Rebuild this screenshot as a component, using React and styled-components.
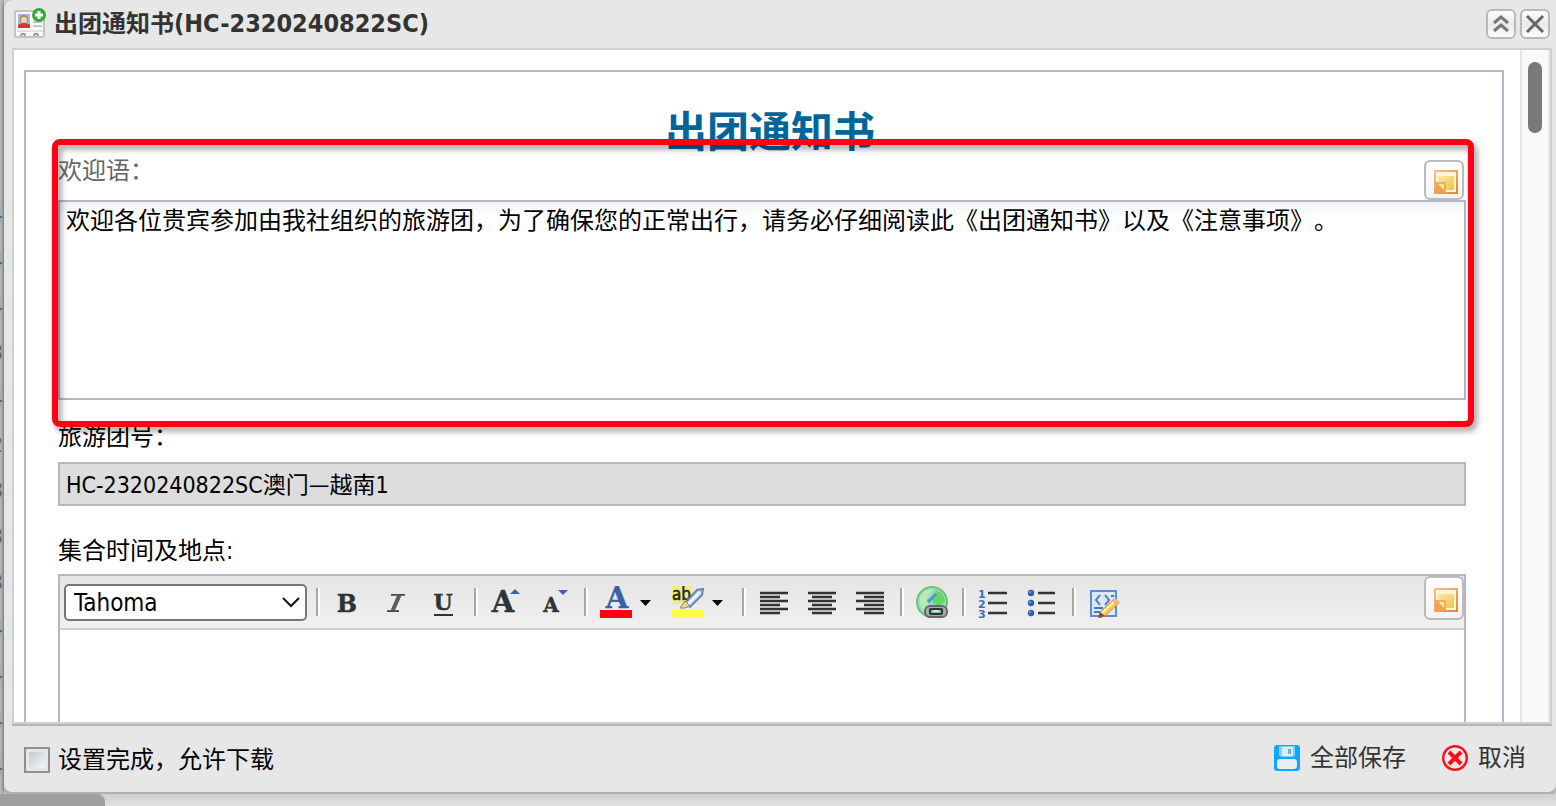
/* eslint-disable react/prop-types */
import { useState } from 'react';
import styled, { createGlobalStyle } from 'styled-components';

const GlobalStyle = createGlobalStyle`
  * {
    box-sizing: border-box;
  }

  body {
    margin: 0;
    overflow: hidden;
    background: #dedede;
    color: #000;
    font-family: "DejaVu Sans Condensed", "Noto Sans CJK SC", sans-serif;
    font-size: 24px;
    line-height: 32px;
    text-spacing-trim: space-all;
  }

  button, input, select, textarea {
    font-family: inherit;
    color: inherit;
  }
`;

const Page = styled.div`
  height: 100vh;
  display: grid;
  grid-template-columns: 4px minmax(0, 1fr);
  grid-template-rows: minmax(0, 1fr) 12px;
`;

const GridBehind = styled.div`
  padding-top: 191px;
  overflow: hidden;
  background: linear-gradient(to right, #bfc0bf, #a9a9a9);
`;

const GridCell = styled.div`
  height: 46px;
  display: flex;
  align-items: center;
  justify-content: flex-end;
  padding-right: 1px;
  border-top: 1px solid #b4b4b4;
  color: #666;
  font-size: 22px;
`;

const BottomScroll = styled.div`
  grid-column: 1 / -1;
  background: linear-gradient(#cfcfcf, #e2e2e2);
`;

const BottomThumb = styled.div`
  width: 105px;
  height: 12px;
  border-radius: 0 8px 0 0;
  background: #9f9f9f;
`;

const Dialog = styled.section`
  display: flex;
  flex-direction: column;
  min-height: 0;
  padding: 0 4px 0 8px;
  background: #e7e7e7;
  border-radius: 8px 0 8px 8px;
  box-shadow: 0 1px 4px rgba(0, 0, 0, .5), inset 0 -2px 0 #b0b0b0;
`;

const Header = styled.header`
  display: flex;
  align-items: center;
  flex: none;
  height: 48px;
  padding: 0 2px;
`;

const Heading = styled.h1`
  flex: 1;
  margin: 0 0 0 8px;
  font-size: 24px;
  line-height: 32px;
  color: #333;
`;

const TourCode = styled.span`
  font-size: 25px;
`;

const ToolButton = styled.button`
  width: 30px;
  height: 30px;
  margin-left: 4px;
  padding: 0;
  display: flex;
  align-items: center;
  justify-content: center;
  border: 2px solid #b9b9b9;
  border-radius: 6px;
  background: linear-gradient(#fff, #e9e9e9 50%, #fdfdfd);
`;

const Body = styled.div`
  flex: 1;
  min-height: 0;
  display: flex;
  overflow: hidden;
  background: #fff;
  border: 2px solid #d0d0d0;
  box-shadow: 0 2px 0 #bdb2b2;
`;

const Content = styled.div`
  flex: 1;
  min-width: 0;
  padding: 20px 16px 0 10px;
`;

const Track = styled.div`
  width: 30px;
  padding: 12px 6px;
  background: #fafafa;
  border: solid #e8e8e8;
  border-width: 0 2px;
`;

const Thumb = styled.div`
  height: 71px;
  border-radius: 7px;
  background: #797979;
`;

const Sheet = styled.form`
  padding: 34px 36px 0 32px;
  border: 2px solid #b5b7c8;
`;

const SheetTitle = styled.h2`
  margin: 0;
  padding-left: 16px;
  text-align: center;
  font-size: 42px;
  line-height: 54px;
  color: #069;
`;

const Welcome = styled.div`
  position: relative;
`;

const Highlight = styled.div`
  position: absolute;
  top: -21px;
  right: -8px;
  bottom: -27px;
  left: -6px;
  border: 6px solid #ff0012;
  border-radius: 8px;
  filter: drop-shadow(3px 4px 3px rgba(0, 0, 0, .4));
  pointer-events: none;
`;

const FieldHead = styled.div`
  display: flex;
  justify-content: space-between;
  height: 40px;
  padding-right: 2px;
`;

const Label = styled.label`
  display: block;
  line-height: ${(props) => (props.$muted ? 22 : 32)}px;
  color: ${(props) => (props.$muted ? '#666' : '#000')};
`;

const NoteButton = styled.button`
  width: 40px;
  height: ${(props) => (props.$tall ? 44 : 40)}px;
  padding: 4px 0 0 4px;
  display: flex;
  align-items: center;
  justify-content: center;
  border: 2px solid #bbb;
  border-radius: 6px;
  background: linear-gradient(#fff, #f3f3f3);
`;

const TextArea = styled.textarea`
  display: block;
  width: 100%;
  height: 200px;
  padding: 3px 6px;
  border: 2px solid #b5b7c8;
  outline: none;
  resize: none;
  background: linear-gradient(#edf1f3, #fff 14px);
  font-size: 24px;
  line-height: 32px;
  text-spacing-trim: space-all;
`;

const Field = styled.div`
  padding-top: ${(props) => props.$top}px;
`;

const CodeInput = styled.input`
  display: block;
  width: 100%;
  height: 44px;
  margin-top: 9px;
  padding: 0 6px 2px;
  border: 2px solid #b5b7c8;
  background: #ddd;
  font-size: 23px;
`;

const Editor = styled.div`
  margin-top: 7px;
  height: 320px;
  border: 2px solid #b5b7c8;
`;

const Toolbar = styled.div`
  display: flex;
  align-items: center;
  height: 54px;
  padding-left: 4px;
  border-bottom: 2px solid #d0d0d0;
  background: linear-gradient(#e5e5e5, #f0f0f0);
`;

const FontPicker = styled.div`
  position: relative;
  width: 243px;
  margin-right: 3px;

  svg {
    position: absolute;
    top: 12px;
    right: 7px;
    pointer-events: none;
  }
`;

const FontSelect = styled.select`
  display: block;
  width: 100%;
  height: 37px;
  padding: 2px 8px 0;
  appearance: none;
  border: 2px solid #767676;
  border-radius: 5px;
  background: #fff;
  color: #000;
  font-size: 24px;
`;

const Separator = styled.span`
  width: 4px;
  height: 28px;
  margin: 0 4px 0 6px;
  border-left: 2px solid #aca899;
  border-right: 2px solid #fff;
`;

const IconButton = styled.button`
  width: ${(props) => (props.$menu ? 72 : 48)}px;
  height: 40px;
  padding: 0 8px;
  display: flex;
  align-items: center;
  gap: 8px;
  border: 0;
  background: none;

  svg {
    flex: none;
  }
`;

const NoteSlot = styled.div`
  flex: 1;
  display: flex;
  justify-content: flex-end;
  align-self: flex-start;
`;

const Footer = styled.footer`
  flex: none;
  display: flex;
  align-items: center;
  height: 70px;
  padding: 2px 26px 0 12px;
`;

const CheckLabel = styled.label`
  flex: 1;
  display: flex;
  align-items: center;
  gap: 8px;
`;

const CheckBox = styled.input`
  appearance: none;
  width: 26px;
  height: 26px;
  margin: 0;
  border: 2px solid #8e8f8f;
  background: linear-gradient(135deg, #c3c9d2, #f6f6f6) content-box #f2f2f2;
  padding: 3px;

  &:checked {
    background: #567 content-box;
  }
`;

const FooterButton = styled.button`
  display: flex;
  align-items: center;
  gap: 10px;
  margin-left: 36px;
  padding: 0 0 4px;
  border: 0;
  background: none;
  color: #333;
  font-size: 24px;
  line-height: 32px;
`;

const Icon = ({ children, size = 32, box = 32 }) => (
  <svg width={size} height={size} viewBox={`0 0 ${box} ${box}`} fill="none" aria-hidden="true">
    {children}
  </svg>
);

const Glyph = ({ children, x = 16, y = 26, size = 24, color = '#2e3338' }) => (
  <text
    x={x}
    y={y}
    textAnchor="middle"
    fontFamily="DejaVu Serif, serif"
    fontWeight="bold"
    fontSize={size}
    fill={color}
    stroke={color}
    strokeWidth=".4"
  >
    {children}
  </text>
);

const ItalicIcon = () => (
  <Icon>
    <path d="M11 8.800h14M7 25.200h12" stroke="#444" strokeWidth="1.800" />
    <path d="M19.500 9L12.500 25" stroke="#555b63" strokeWidth="4" />
  </Icon>
);

const UnderlineIcon = () => (
  <Icon>
    <Glyph size={22} x={15} y={24}>U</Glyph>
    <path d="M6 29h19" stroke="#333" strokeWidth="2" />
  </Icon>
);

const CardIcon = () => (
  <Icon>
    <rect x="1" y="3" width="29" height="26" rx="2" fill="#fafafa" stroke="#c4c4c4" strokeWidth="2" />
    <rect x="4" y="6" width="12" height="14" fill="#9fb9dc" />
    <circle cx="10" cy="11" r="4" fill="#b58560" />
    <circle cx="10" cy="12" r="3" fill="#f3d2b4" />
    <path d="M4 20v-2c0-2 3-3 6-3s6 1 6 3v2z" fill="#da3535" />
    <path d="M19 14h9M19 18h9" stroke="#b9cbe2" strokeWidth="2" />
    <path d="M3 23h26" stroke="#e2e2e2" strokeWidth="2" />
    <path d="M7 28c0-3 4-3 4 0M20 28c0-3 4-3 4 0" stroke="#999" strokeWidth="2" />
    <circle cx="25" cy="7" r="7" fill="#35ab33" />
    <path d="M25 3v8M21 7h8" stroke="#fff" strokeWidth="3" />
  </Icon>
);

const NoteIcon = () => (
  <Icon size={24} box={24}>
    <defs>
      <linearGradient id="note-edge" x1="0" y1="0" x2="1" y2="1">
        <stop offset="0" stopColor="#f6c184" />
        <stop offset="1" stopColor="#e3892f" />
      </linearGradient>
      <linearGradient id="note-fill" x1="0" y1="0" x2="1" y2="1">
        <stop offset="0" stopColor="#fbe9a8" />
        <stop offset="1" stopColor="#efc545" />
      </linearGradient>
    </defs>
    <rect x="1" y="1" width="22" height="22" fill="#fff3dc" stroke="url(#note-edge)" strokeWidth="2" />
    <path d="M4 6h16v14H12L4 12z" fill="url(#note-fill)" />
    <path d="M2 13h9v9z" fill="#fbe3a0" stroke="#e8a04e" strokeWidth="1.500" />
    <path d="M2 14l9 8H2z" fill="#eda552" />
  </Icon>
);

const GrowIcon = () => (
  <Icon>
    <Glyph x={13} y={26} size={29}>A</Glyph>
    <path d="M20 8l5-5 5 5z" fill="#3a64ad" />
  </Icon>
);

const ShrinkIcon = () => (
  <Icon>
    <Glyph x={13} y={26} size={20}>A</Glyph>
    <path d="M20 4h10l-5 5z" fill="#3a64ad" />
  </Icon>
);

const ForeColorIcon = () => (
  <Icon>
    <Glyph x={17} y={22} size={29} color="#3b62a8">A</Glyph>
    <path d="M0 24h32v8H0z" fill="#ff0012" />
  </Icon>
);

const BackColorIcon = () => (
  <Icon>
    <path d="M0 0h20v18H0z" fill="#f2ec7c" />
    <text x="0" y="14" fontFamily="DejaVu Sans Condensed" fontSize="17" fill="#222" stroke="#222" strokeWidth=".5">ab</text>
    <path d="M13 17L25 4l6-1-1 6-12 12z" fill="#c7daf0" stroke="#6687b5" strokeWidth="2" />
    <path d="M16 18L28 6" stroke="#f5faff" strokeWidth="2" />
    <path d="M13 15l5 5-5 2H8z" fill="#e6d5a3" stroke="#8b8366" />
    <path d="M0 24h32v8H0z" fill="#fdfd44" />
  </Icon>
);

const Caret = () => (
  <svg width="11" height="7" viewBox="0 0 11 7" aria-hidden="true">
    <path d="M0 1h11L5.500 7z" />
  </svg>
);

const AlignIcon = ({ side }) => {
  const short = { left: 2, center: 6, right: 10 }[side];
  const d = [0, 1, 2, 3, 4, 5]
    .map((i) => (i % 2 ? `M${short} ${7 + i * 4}h20` : `M2 ${7 + i * 4}h28`))
    .join('');
  return <Icon><path d={d} stroke="#333" strokeWidth="2.600" /></Icon>;
};

const LinkIcon = () => (
  <Icon>
    <circle cx="16" cy="16" r="15" fill="#9bd3dc" stroke="#72c266" strokeWidth="2" />
    <path d="M4 11c3-6 7-8 12-8l-2 6-4 4 2 5-4 7c-4-4-5-8-4-14z" fill="#b4edaa" />
    <path d="M19 4c6 1 10 6 10 11l-5 5-7-3-1-4 4-3z" fill="#69d468" />
    <path d="M12 16l8-8" stroke="#4c98c4" strokeWidth="3" />
    <rect x="9" y="20" width="22" height="11" rx="5" fill="#aaa" stroke="#666" strokeWidth="2" />
    <rect x="14" y="23" width="12" height="5" rx="1" fill="#7fc4a0" stroke="#333" strokeWidth="2" />
    <path d="M17 25h6" stroke="#ddd" strokeWidth="2" />
  </Icon>
);

const OrderedIcon = () => (
  <Icon>
    <g fontFamily="DejaVu Sans" fontWeight="bold" fontSize="11" fill="#3d6cc0">
      <text x="0" y="12">1</text>
      <text x="0" y="22">2</text>
      <text x="0" y="32">3</text>
    </g>
    <path d="M10 7h19M10 17h19M10 27h19" stroke="#333" strokeWidth="2.600" />
  </Icon>
);

const BulletIcon = () => (
  <Icon>
    {[7, 17, 27].map((y) => (
      <g key={y}>
        <circle cx="5" cy={y} r="3.200" fill="#2f5fb5" />
        <circle cx="4" cy={y - 1} r="1" fill="#8fb0e6" />
      </g>
    ))}
    <path d="M12 7h17M12 17h17M12 27h17" stroke="#333" strokeWidth="2.600" />
  </Icon>
);

const SourceIcon = () => (
  <Icon>
    <rect x="3" y="5" width="25" height="25" fill="#dbe8fa" stroke="#5f8ccb" strokeWidth="2" />
    <path d="M12 9l-4 5 4 5M17 9l4 5-4 5M23 10h3M6 22h9M6 26h6" stroke="#4779c2" strokeWidth="2" />
    <path d="M12 26L26 13l5 4-14 13-6 2z" fill="#f7c653" stroke="#cf8f3d" />
    <path d="M14 27L27 15" stroke="#fff0ae" strokeWidth="2" />
    <path d="M24 15l3-3 5 4-3 3z" fill="#eeb695" />
    <path d="M10 32l2-6 5 4z" fill="#77502f" />
  </Icon>
);

const SaveIcon = () => (
  <Icon size={26} box={26}>
    <rect width="26" height="26" rx="3" fill="#0ea9f6" />
    <path d="M5 1h16v8q0 3-3 3H8q-3 0-3-3z" fill="#7ed2fb" />
    <rect x="8" y="2" width="11" height="9" rx="1" fill="#d9effb" />
    <rect x="14" y="4" width="3" height="5" fill="#4abdf5" />
    <rect x="3" y="14" width="20" height="10" rx="3" fill="#eaeff1" />
  </Icon>
);

const CancelIcon = () => (
  <Icon size={26} box={26}>
    <circle cx="13" cy="13" r="11.800" fill="#f7e4e4" stroke="#f5101c" strokeWidth="2.400" />
    <path d="M7 7l12 12M19 7L7 19" stroke="#f5101c" strokeWidth="4" />
  </Icon>
);

const behind = ['4', '4', '4', '3', '4', '2', '3', '3', '3', '4', '4', '4', '4'];

const App = () => {
  const [welcome, setWelcome] = useState('欢迎各位贵宾参加由我社组织的旅游团，为了确保您的正常出行，请务必仔细阅读此《出团通知书》以及《注意事项》。');
  const [done, setDone] = useState(false);

  return (
    <Page lang="zh-CN">
      <GlobalStyle />
      <GridBehind aria-hidden="true">
        {/* eslint-disable-next-line react/no-array-index-key */}
        {behind.map((n, i) => <GridCell key={i}>{n}</GridCell>)}
      </GridBehind>
      <Dialog role="dialog" aria-labelledby="dialog-title">
        <Header>
          <CardIcon />
          <Heading id="dialog-title">
            出团通知书
            <TourCode>(HC-2320240822SC)</TourCode>
          </Heading>
          <ToolButton type="button" aria-label="收起">
            <Icon size={20} box={20}>
              <path d="M3 9l7-6 7 6M3 17l7-6 7 6" stroke="#777" strokeWidth="3" />
            </Icon>
          </ToolButton>
          <ToolButton type="button" aria-label="关闭">
            <Icon size={20} box={20}>
              <path d="M2 2l16 16M18 2L2 18" stroke="#666" strokeWidth="3" />
            </Icon>
          </ToolButton>
        </Header>
        <Body>
          <Content>
            <Sheet>
              <SheetTitle>出团通知书</SheetTitle>
              <Welcome>
                <FieldHead>
                  <Label htmlFor="welcome" $muted>欢迎语：</Label>
                  <NoteButton type="button" aria-label="模板"><NoteIcon /></NoteButton>
                </FieldHead>
                <TextArea id="welcome" value={welcome} onChange={(e) => setWelcome(e.target.value)} />
                <Highlight />
              </Welcome>
              <Field $top={21}>
                <Label htmlFor="code">旅游团号：</Label>
                <CodeInput id="code" readOnly value="HC-2320240822SC澳门—越南1" />
              </Field>
              <Field $top={29}>
                <Label as="div">集合时间及地点:</Label>
                <Editor>
                  <Toolbar role="toolbar">
                    <FontPicker>
                      <FontSelect aria-label="字体" defaultValue="Tahoma">
                        <option>Tahoma</option>
                        <option>Arial</option>
                        <option>Verdana</option>
                      </FontSelect>
                      <svg width="18" height="12" viewBox="0 0 18 12" fill="none">
                        <path d="M1 2l8 8 8-8" stroke="#111" strokeWidth="2" />
                      </svg>
                    </FontPicker>
                    <Separator />
                    <IconButton type="button" aria-label="加粗"><Icon><Glyph x={15}>B</Glyph></Icon></IconButton>
                    <IconButton type="button" aria-label="斜体"><ItalicIcon /></IconButton>
                    <IconButton type="button" aria-label="下划线"><UnderlineIcon /></IconButton>
                    <Separator />
                    <IconButton type="button" aria-label="增大"><GrowIcon /></IconButton>
                    <IconButton type="button" aria-label="缩小"><ShrinkIcon /></IconButton>
                    <Separator />
                    <IconButton type="button" aria-label="文字颜色" $menu>
                      <ForeColorIcon />
                      <Caret />
                    </IconButton>
                    <IconButton type="button" aria-label="背景颜色" $menu>
                      <BackColorIcon />
                      <Caret />
                    </IconButton>
                    <Separator />
                    <IconButton type="button" aria-label="左对齐"><AlignIcon side="left" /></IconButton>
                    <IconButton type="button" aria-label="居中"><AlignIcon side="center" /></IconButton>
                    <IconButton type="button" aria-label="右对齐"><AlignIcon side="right" /></IconButton>
                    <Separator />
                    <IconButton type="button" aria-label="链接"><LinkIcon /></IconButton>
                    <Separator />
                    <IconButton type="button" aria-label="编号"><OrderedIcon /></IconButton>
                    <IconButton type="button" aria-label="项目符号"><BulletIcon /></IconButton>
                    <Separator />
                    <IconButton type="button" aria-label="源码"><SourceIcon /></IconButton>
                    <NoteSlot>
                      <NoteButton type="button" aria-label="模板" $tall><NoteIcon /></NoteButton>
                    </NoteSlot>
                  </Toolbar>
                </Editor>
              </Field>
            </Sheet>
          </Content>
          <Track><Thumb /></Track>
        </Body>
        <Footer>
          <CheckLabel>
            <CheckBox type="checkbox" checked={done} onChange={(e) => setDone(e.target.checked)} />
            设置完成，允许下载
          </CheckLabel>
          <FooterButton type="button">
            <SaveIcon />
            全部保存
          </FooterButton>
          <FooterButton type="button">
            <CancelIcon />
            取消
          </FooterButton>
        </Footer>
      </Dialog>
      <BottomScroll><BottomThumb /></BottomScroll>
    </Page>
  );
};

export default App;
